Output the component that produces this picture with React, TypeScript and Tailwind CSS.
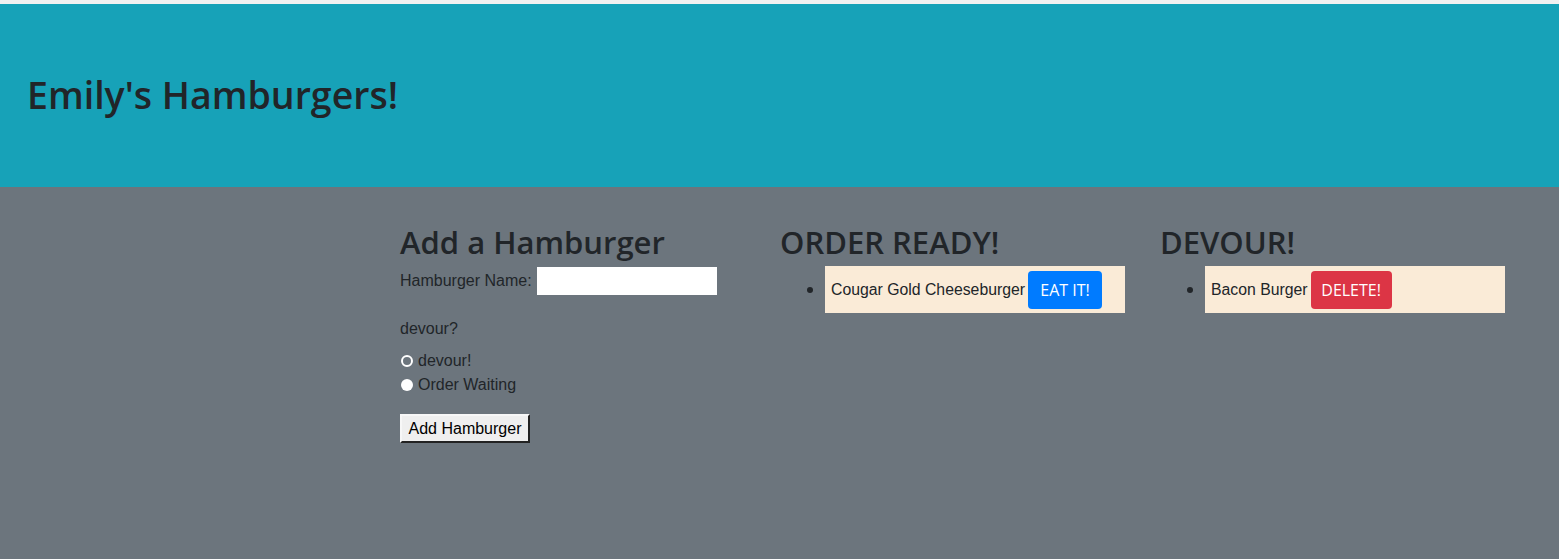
import React from "react";

const font = { fontFamily: '"Liberation Sans", Arial, sans-serif' };
const headingFont = { fontFamily: '"Open Sans", "Liberation Sans", sans-serif' };

function OrderItem({
  name,
  label,
  color,
  width,
}: {
  name: string;
  label: string;
  color: string;
  width: string;
}) {
  return (
    <div className="flex items-center mt-[5px]">
      <span className="ml-[27px] mr-[12px] w-[6px] h-[6px] rounded-full bg-[#212529]" />
      <div className="flex items-center gap-[3px] w-[300px] h-[47px] pl-[6px] bg-[#faebd7]">
        <span className="text-[15.8px] leading-[24px] text-[#212529]">{name}</span>
        <button
          className={`${color} ${width} h-[38px] rounded-[4px] text-white text-[16px] leading-[24px] text-center`}
          style={headingFont}
        >
          {label}
        </button>
      </div>
    </div>
  );
}

export default function App() {
  return (
    <div className="min-h-screen bg-[#6c757d] text-[#212529]" style={font}>
      <div className="h-[4px] bg-[#f1f1f1]" />

      <header className="h-[183px] bg-[#17a2b8] flex items-center pl-[27px]">
        <h1 className="text-[37.5px] leading-[46px] font-semibold -mt-[2px]" style={headingFont}>
          Emily's Hamburgers!
        </h1>
      </header>

      <main className="flex pl-[400px] pt-[36px]">
        <section className="w-[380px]">
          <h2 className="text-[31px] leading-[38px] font-semibold" style={headingFont}>
            Add a Hamburger
          </h2>
          <div className="flex items-center h-[32px] mt-[4px]">
            <span className="text-[16px] leading-[24px]">Hamburger Name:</span>
            <input className="ml-[5px] w-[180px] h-[28px] bg-white outline-none px-1" />
          </div>

          <p className="mt-[20px] text-[16px] leading-[24px]">devour?</p>

          <div className="mt-[8px] flex flex-col">
            <label className="flex items-center h-[24px]">
              <span className="ml-[1px] mr-[5px] w-[12px] h-[12px] rounded-full border-[2px] border-white bg-[#6c757d]" />
              <span className="text-[16px] leading-[24px]">devour!</span>
            </label>
            <label className="flex items-center h-[24px]">
              <span className="ml-[1px] mr-[5px] w-[12px] h-[12px] rounded-full bg-white" />
              <span className="text-[16px] leading-[24px]">Order Waiting</span>
            </label>
          </div>

          <button className="mt-[17px] w-[130px] h-[29px] bg-[#efefef] text-black text-[16px] leading-[20px] border-t-2 border-l-2 border-r-2 border-b-2 border-t-[#f7f7f7] border-l-[#f7f7f7] border-r-[#222] border-b-[#222]">
            Add Hamburger
          </button>
        </section>

        <section className="w-[380px]">
          <h2 className="text-[31px] leading-[38px] font-semibold" style={headingFont}>
            ORDER READY!
          </h2>
          <OrderItem
            name="Cougar Gold Cheeseburger"
            label="EAT IT!"
            color="bg-[#007bff]"
            width="w-[74px]"
          />
        </section>

        <section className="w-[380px]">
          <h2 className="text-[31px] leading-[38px] font-semibold" style={headingFont}>
            DEVOUR!
          </h2>
          <OrderItem
            name="Bacon Burger"
            label="DELETE!"
            color="bg-[#dc3545]"
            width="w-[81px]"
          />
        </section>
      </main>
    </div>
  );
}
